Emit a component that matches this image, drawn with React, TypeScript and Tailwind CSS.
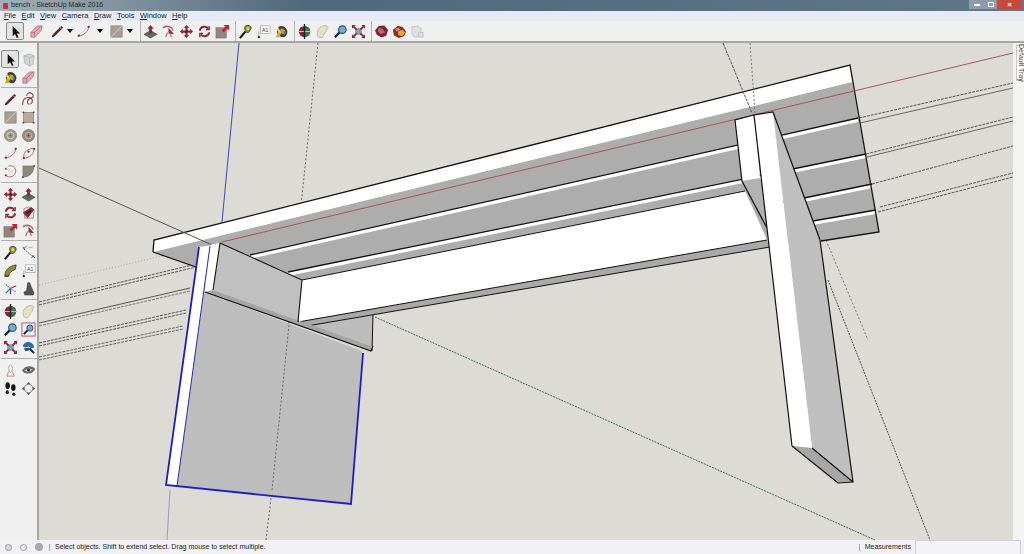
import React from "react";

const RED = "#8c2a36";

const Move = () => (
  <g fill={RED}>
    <path d="M8 1l3 3H9.200v2.800H12V5l3 3-3 3V9.200H9.200V12H11l-3 3-3-3h1.800V9.200H4V11L1 8l3-3v1.800h2.800V4H5z" />
    <circle cx="8" cy="8" r="1.300" fill="#5c1820" />
  </g>
);
const PushPull = () => (
  <g>
    <path d="M1 11l7-4 7 4-7 4z" fill="#5f6b5c" stroke="#3a423a" strokeWidth=".6" />
    <path d="M8 1l3.500 4H9.500v5h-3V5H4.500z" fill={RED} />
  </g>
);
const FollowMe = () => (
  <g fill="none">
    <path d="M2 4c5-3 10-1 11 3" stroke="#b5636c" strokeWidth="1.600" />
    <path d="M8 4l6 7-6-1z" fill={RED} />
    <path d="M7 9l-2 5M10 10l1 4" stroke="#b5636c" strokeWidth="1.200" />
  </g>
);
const Rotate = () => (
  <g fill="none" stroke={RED} strokeWidth="2.200">
    <path d="M3 7a5 5 0 0 1 9-2" />
    <path d="M13 9a5 5 0 0 1-9 2" />
    <path d="M13 2v4H9.500M3 14v-4h3.500" strokeWidth="1.400" />
  </g>
);
const Scale = () => (
  <g>
    <rect x="1" y="4" width="11" height="11" fill="#8f887a" stroke="#666" strokeWidth=".5" />
    <path d="M15 1v6l-2-2-4 4-2-2 4-4-2-2z" fill="#c8202f" />
  </g>
);
const RectIcon = () => (
  <g>
    <rect x="2" y="2" width="12" height="12" fill="#a69e90" stroke="#77726a" strokeWidth=".6" />
    <path d="M2 14L14 2" stroke="#c9c2b6" strokeWidth="1.200" />
  </g>
);
const RotRect = () => (
  <g>
    <rect x="2.500" y="2.500" width="11" height="11" fill="#b8a99a" stroke="#77726a" strokeWidth=".6" />
    <g fill={RED}>
      <circle cx="2.500" cy="2.500" r="1" />
      <circle cx="13.500" cy="13.500" r="1" />
      <circle cx="13.500" cy="2.500" r="1" />
      <circle cx="2.500" cy="13.500" r="1" />
    </g>
  </g>
);
const Circle1 = () => (
  <g fill="none">
    <circle cx="8" cy="8" r="6.500" fill="#a29c8c" stroke="#77726a" strokeWidth=".6" />
    <circle cx="8" cy="8" r="3.500" stroke="#d1ccc0" strokeWidth="1" />
    <circle cx="8" cy="8" r="1" fill="#6a655a" />
  </g>
);
const Circle2 = () => (
  <g fill="none">
    <circle cx="8" cy="8" r="6.500" fill="#998a7c" stroke="#6e655c" strokeWidth=".6" />
    <circle cx="8" cy="8" r="3.500" stroke="#c5b8aa" strokeWidth="1" />
    <circle cx="8" cy="8" r="1" fill={RED} />
  </g>
);
const Arc1 = () => (
  <g fill="none" stroke="#b8606c" strokeWidth="1">
    <path d="M2 13C9 12 13 8 14 2" />
    <path d="M2 13L14 2" stroke="#c9c9c9" />
    <circle cx="3" cy="12.500" r="1.200" fill={RED} stroke="none" />
    <circle cx="13.500" cy="3" r="1.200" fill={RED} stroke="none" />
  </g>
);
const Arc2 = () => (
  <g fill="none" stroke="#b8606c" strokeWidth="1">
    <path d="M3 13C2 6 8 2 14 3c0 5-5 10-11 10z" />
    <circle cx="3" cy="13" r="1.200" fill={RED} stroke="none" />
    <circle cx="8" cy="6" r="1.200" fill={RED} stroke="none" />
    <circle cx="14" cy="3" r="1.200" fill={RED} stroke="none" />
  </g>
);
const Arc3 = () => (
  <g fill="none" stroke="#b8606c" strokeWidth="1">
    <path d="M6 2c6-1 9 4 7 8s-7 5-10 2" />
    <path d="M6 2L3 5l5 3 3-1" stroke="#c9c9c9" />
    <circle cx="3" cy="12" r="1.200" fill={RED} stroke="none" />
    <circle cx="3" cy="5" r="1" fill={RED} stroke="none" />
  </g>
);
const Pie = () => (
  <g>
    <path d="M2 2L14 2C14 9 9 14 2 14z" fill="#8f887a" stroke="#6a655a" strokeWidth=".5" />
    <circle cx="14" cy="2" r="1" fill={RED} />
    <circle cx="2" cy="14" r="1" fill={RED} />
  </g>
);
const Offset = () => (
  <g>
    <path d="M3 4L8 2l6 3-1 9H4z" fill="#e8e8e8" stroke="#b8606c" strokeWidth=".8" />
    <path d="M2 8l9-6 3 3-7 9z" fill={RED} />
    <path d="M5 8l5-3 1 2-4 4z" fill="#2d2d2d" />
  </g>
);
const Pencil = () => (
  <g>
    <path d="M2 14l2-4 8-8 2 2-8 8z" fill="#5a2a30" />
    <path d="M10.500 3.500l2 2" stroke="#d0a0a8" strokeWidth="1" />
    <path d="M2 14l1-3 2 2z" fill="#1e1e1e" />
  </g>
);
const Freehand = () => (
  <g fill="none" stroke="#8a3a46" strokeWidth="1.100">
    <path d="M2 14C1 8 5 5 9 6c4 1 4 5 1 7M9 13C6 13 6 8 10 7c3-1 4-3 2-5S6 1 6 4" />
  </g>
);
const Eraser = () => (
  <g>
    <path d="M2 9l7-7h5l-1 5-7 7H2z" fill="#e9a5b0" stroke="#a8616d" strokeWidth=".7" />
    <path d="M2 9h4l7-7" fill="none" stroke="#a8616d" strokeWidth=".7" />
    <path d="M6 9v5" stroke="#a8616d" strokeWidth=".7" />
  </g>
);
const Select = () => <path d="M5 2v11l2.500-2.300L9.500 15l1.800-.8L9.300 10H13z" fill="#111" />;
const Comp = () => (
  <g fill="#d2d4d4" stroke="#a8acac" strokeWidth=".7">
    <path d="M3 4l6-2 5 2-1 9-4 2-5-3z" />
    <path d="M3 4l6 2 5-2M9 6v9" fill="none" />
  </g>
);
const Paint = () => (
  <g>
    <path d="M5 3c3-2 8 0 9 4 1 3-1 7-4 7-4 0-7-3-7-6z" fill="#3d3d36" />
    <path d="M7 5c2-1 5 1 5 3s-1 3-2 3-4-3-3-6z" fill="#cfa33a" />
    <path d="M2 14l3-8 3 2-2 6z" fill="#c0b232" />
    <path d="M10 7l3 2-2 3z" fill="#4d79a8" />
    <path d="M5 4L3 7l5 4z" fill="#e8d94c" />
  </g>
);
const Tape = () => (
  <g>
    <path d="M8 2c3-1 6 0 6 2s-2 5-4 5-4-5-2-7z" fill="#989a30" stroke="#44441a" strokeWidth="1" />
    <circle cx="10.500" cy="5" r="1.500" fill="#ded98a" />
    <path d="M2 15l6-7" stroke="#1b1b1b" strokeWidth="2.200" />
  </g>
);
const TextIcon = () => (
  <g>
    <rect x="5" y="2" width="10" height="8" fill="#fff" stroke="#8a8a8a" strokeWidth=".6" />
    <text x="6.500" y="8.300" fontSize="5.500" fill="#333" fontFamily="Liberation Sans, sans-serif">A1</text>
    <path d="M3 8v5" stroke="#999" strokeWidth=".8" />
    <circle cx="3" cy="14" r="1.200" fill="#222" />
  </g>
);
const Dim = () => (
  <g stroke="#555" strokeWidth="1" fill="none">
    <path d="M3 4l10 9" strokeDasharray="2 1" />
    <path d="M2 2l2 3M6 1l-3 3M14 11l-3 3M12 11l3 3" />
    <path d="M8 3l5-1" stroke="#aaa" />
  </g>
);
const Protractor = () => (
  <g>
    <path d="M2 14C2 7 7 3 14 2l-1 5c-4 1-6 3-7 7z" fill="#8e8c40" stroke="#3e3e1a" strokeWidth=".9" />
    <path d="M2 14h4" stroke="#222" strokeWidth="1" />
  </g>
);
const Axes = () => (
  <g strokeWidth="1.300" fill="none">
    <path d="M8 8L2 3" stroke="#666" strokeDasharray="1.500 1" />
    <path d="M8 8l6-3" stroke="#b32b3a" />
    <path d="M8 8l-5 5" stroke="#2a8a4a" />
    <path d="M8 8v6" stroke="#2b3fb0" />
    <path d="M8 8l6 4" stroke="#888" strokeDasharray="1.500 1" />
  </g>
);
const Section = () => (
  <path d="M7 2c2-1 3 0 3 2l4 9-1 2H4l-1-3 3-2z" fill="#55554e" stroke="#333" strokeWidth=".5" />
);
const Orbit = () => (
  <g>
    <circle cx="8" cy="8" r="6" fill="#7b2430" />
    <path d="M8 2a6 6 0 0 1 0 12z" fill="#3e6d4f" />
    <path d="M1 8h14" stroke="#b8c0b8" strokeWidth="1.200" />
    <path d="M8 0v16" stroke="#222" strokeWidth="1.400" />
  </g>
);
const Pan = () => (
  <path d="M3 13C1 9 3 4 8 2c3-1 6 0 6 2-2 0-2 1-1 2-1 1-1 2-2 3s-2 3-3 5c-2 1-4 1-5-1z" fill="#e8dfc1" stroke="#b9ab84" strokeWidth=".8" />
);
const Zoom = () => (
  <g>
    <circle cx="10" cy="6" r="4" fill="#7da9cf" stroke="#2b4f74" strokeWidth="1.200" />
    <path d="M7 9l-5 5" stroke="#111f33" strokeWidth="2.400" />
  </g>
);
const ZoomWin = () => (
  <g>
    <rect x="1" y="1" width="14" height="14" fill="none" stroke="#b9384a" strokeWidth=".9" />
    <circle cx="9.500" cy="6.500" r="3.300" fill="#7da9cf" stroke="#2b4f74" strokeWidth="1" />
    <path d="M7 9l-4 4" stroke="#111f33" strokeWidth="2" />
  </g>
);
const ZoomExt = () => (
  <g>
    <rect x="4.500" y="4.500" width="7" height="7" fill="#7f9db5" />
    <g fill="none" stroke={RED} strokeWidth="2">
      <path d="M2 2l4 4M14 2l-4 4M2 14l4-4M14 14l-4-4" />
    </g>
    <g fill={RED}>
      <path d="M1 1h4L1 5zM15 1h-4l4 4zM1 15h4l-4-4zM15 15h-4l4-4z" />
    </g>
  </g>
);
const Prev = () => (
  <g>
    <path d="M2 7c0-3 3-5 6-5 3 0 6 3 6 6l-3 1-3-2-3 1z" fill="#2b6ea5" />
    <path d="M9 9l5 5" stroke="#1a2a40" strokeWidth="2.200" />
    <path d="M3 9l5-1 1 3-4 1z" fill="#1f4f7b" />
  </g>
);
const Warehouse = () => (
  <g>
    <path d="M1 7l4-5 6-.5 4 5-2 6-5 2-5-3z" fill="#7d2431" />
    <path d="M5 4l4 1 3 4-5 2-3-3z" fill="#c06070" />
  </g>
);
const Ext = () => (
  <g>
    <path d="M1 6l5-4 5 1 4 5-2 5-6 2-5-3z" fill="#8c2a2c" />
    <path d="M6 8l5-2 3 3-3 4-4-1z" fill="#e0ab2e" />
    <path d="M3 5l4-1 2 2-4 2z" fill="#d48890" />
  </g>
);
const Share = () => (
  <g fill="#dfe1e1" stroke="#b3b6b6" strokeWidth=".7">
    <path d="M2 3l7-1 3 3-1 8-6 1-3-4z" />
    <path d="M9 9h5v5H9z" />
  </g>
);
const Person = () => (
  <g fill="none" stroke="#999" strokeWidth=".8">
    <ellipse cx="8" cy="6" rx="2" ry="4" />
    <path d="M6 9l-2 5M10 9l2 5M4 14h8" stroke="#bb6670" />
  </g>
);
const Eye = () => (
  <g>
    <path d="M1 8c3-5 10-6 14-2-1 5-10 8-14 2z" fill="#6a6a6a" />
    <path d="M4 8c2-2 6-2 8-1-2 2-6 3-8 1z" fill="#e8e8e8" />
    <circle cx="8" cy="7.500" r="1.500" fill="#222" />
  </g>
);
const Feet = () => (
  <g fill="#141414">
    <ellipse cx="5" cy="5" rx="2.400" ry="3.600" />
    <ellipse cx="4.500" cy="12" rx="1.700" ry="2.200" />
    <ellipse cx="11" cy="7" rx="2.400" ry="3.600" />
    <ellipse cx="11.500" cy="14" rx="1.700" ry="1.800" />
  </g>
);
const Position = () => (
  <g fill="none" stroke="#666" strokeWidth=".9">
    <circle cx="8" cy="8" r="4.500" />
    <path d="M8 1l2 2H6zM8 15l2-2H6zM1 8l2 2V6zM15 8l-2 2V6z" fill="#444" stroke="none" />
  </g>
);

function Ico({ children, boxed, className = "" }: { children: React.ReactNode; boxed?: boolean; className?: string }) {
  return (
    <div
      className={
        "flex w-[18px] h-[18px] shrink-0 items-center justify-center " +
        (boxed ? "bg-[#e4e4e4] border border-[#8a8a8a] rounded-[2px] " : "") +
        className
      }
    >
      <svg width="15" height="15" viewBox="0 0 16 16">
        {children}
      </svg>
    </div>
  );
}

const Caret = ({ className = "" }: { className?: string }) => (
  <div className={"w-0 h-0 border-x-[3px] border-x-transparent border-t-[4px] border-t-black " + className} />
);
const VSep = () => <div className="ml-[4px] w-px h-[20px] bg-[#b4b4b4]" />;
const HSep = ({ wide }: { wide?: boolean }) => (
  <div className={"col-span-2 h-px bg-[#b0b0b0] " + (wide ? "my-[2px]" : "mt-[1px] mb-[2px]")} />
);

const menus = ["File", "Edit", "View", "Camera", "Draw", "Tools", "Window", "Help"];

function LeftBar() {
  return (
    <div className="flex w-[39px] shrink-0 border-r-2 border-[#a6a6a0] bg-[#f0f0f0] pt-[7px] pl-[1px]">
      <div className="grid h-fit grid-cols-[18px_18px]">
        <Ico boxed><Select /></Ico>
        <Ico><Comp /></Ico>
        <Ico><Paint /></Ico>
        <Ico><Eraser /></Ico>
        <HSep />
        <Ico><Pencil /></Ico>
        <Ico><Freehand /></Ico>
        <Ico><RectIcon /></Ico>
        <Ico><RotRect /></Ico>
        <Ico><Circle1 /></Ico>
        <Ico><Circle2 /></Ico>
        <Ico><Arc1 /></Ico>
        <Ico><Arc2 /></Ico>
        <Ico><Arc3 /></Ico>
        <Ico><Pie /></Ico>
        <HSep wide />
        <Ico><Move /></Ico>
        <Ico><PushPull /></Ico>
        <Ico><Rotate /></Ico>
        <Ico><Offset /></Ico>
        <Ico><Scale /></Ico>
        <Ico><FollowMe /></Ico>
        <HSep />
        <Ico><Tape /></Ico>
        <Ico><Dim /></Ico>
        <Ico><Protractor /></Ico>
        <Ico><TextIcon /></Ico>
        <Ico><Axes /></Ico>
        <Ico><Section /></Ico>
        <HSep wide />
        <Ico><Orbit /></Ico>
        <Ico><Pan /></Ico>
        <Ico><Zoom /></Ico>
        <Ico><ZoomWin /></Ico>
        <Ico><ZoomExt /></Ico>
        <Ico><Prev /></Ico>
        <HSep wide />
        <Ico><Person /></Ico>
        <Ico><Eye /></Ico>
        <Ico><Feet /></Ico>
        <Ico><Position /></Ico>
      </div>
    </div>
  );
}

function Slat({ x1, y1, x2, y2 }: { x1: number; y1: number; x2: number; y2: number }) {
  return (
    <g>
      <polygon points={`${x1},${y1} ${x2},${y2} ${x2},${y2 + 4} ${x1},${y1 + 4}`} fill="#fff" />
      <line x1={x1} y1={y1} x2={x2} y2={y2} stroke="#111" strokeWidth="1.300" />
    </g>
  );
}

function Bench() {
  return (
    <svg className="block h-full w-full" viewBox="39 43 974 497">
      {/* guides */}
      <g fill="none" strokeWidth="1">
        <path d="M318 43L288 330" stroke="#666" strokeDasharray="2 2" />
        <path d="M828 280L930 540" stroke="#555" strokeDasharray="2 1" />
        <path d="M826 240L868 340" stroke="#777" strokeDasharray="2 2" />
        <path d="M266 540L272 490" stroke="#666" strokeDasharray="2 2" />
        <path d="M170 490L167 540" stroke="#9a9cb0" />
        <path d="M375 317L875 540" stroke="#3f6e48" strokeDasharray="2 1" />
        <path d="M39 285L200 247" stroke="#c49a9a" strokeDasharray="1 2" />
        <path d="M239 43L220 243" stroke="#3a4ab8" />
        <path d="M878 212L1013 177M880 207L1013 173" stroke="#555" strokeDasharray="3 1" />
        <path d="M872 184L1013 146" stroke="#555" strokeDasharray="3 1" />
        <path d="M866 154L1013 117" stroke="#555" strokeDasharray="3 1" />
        <path d="M867 157L1013 121" stroke="#666" />
        <path d="M859 118L1013 83" stroke="#555" strokeDasharray="3 1" />
        <path d="M860 123L1013 88" stroke="#666" />
        <path d="M39 302L196 264M39 305L196 267" stroke="#555" strokeDasharray="3 1" />
        <path d="M39 323L190 288" stroke="#555" />
        <path d="M39 326L190 291" stroke="#777" strokeDasharray="3 1" />
        <path d="M39 343L186 310M39 346L186 313" stroke="#555" strokeDasharray="3 1" />
        <path d="M39 357L183 326M39 360L183 329" stroke="#666" strokeDasharray="3 1" />
      </g>

      {/* underside and slats */}
      <polygon points="153,252 852,82 879,232 821,241 767,240 745,191 302,280 220,243 200,247 195,267" fill="#adadad" />
      <Slat x1={250} y1={255} x2={858} y2={118} />
      <Slat x1={288} y1={272} x2={866} y2={154} />
      <Slat x1={770} y1={205} x2={872} y2={184} />
      <Slat x1={790} y1={225} x2={876} y2={210} />
      <polygon points="154,240 850,65 852,82 153,252" fill="#fff" />
      <path d="M153 252L154 240L850 65L879 232L821 241" fill="none" stroke="#111" strokeWidth="1.300" />
      <path d="M153 252L196 267" stroke="#111" strokeWidth="1.200" />
      <path d="M222 242L1013 53" stroke="#a8545c" strokeWidth="1" />
      <path d="M39 168L212 245" stroke="#555" strokeWidth="1" />
      <path d="M723 43L752 113" stroke="#555" strokeWidth="1" strokeDasharray="3 1" />
      <path d="M750 43L755 113" stroke="#777" strokeWidth="1" strokeDasharray="2 2" />

      {/* beam */}
      <polygon points="302,280 745,191 767,240 298,322" fill="#fff" />
      <polygon points="298,322 767,240 770,247 307,326" fill="#a9a9a9" />
      <polygon points="307,326 373,315 372,351" fill="#bcbcbc" />
      <path d="M302 280L745 191M298 322L767 240M307 326L770 247" stroke="#111" strokeWidth="1" />
      <path d="M373 315L372 351" stroke="#111" />

      {/* left leg */}
      <polygon points="204,292 362,351 351,504 177,486" fill="#bdbdbd" />
      <polygon points="199,247 210,246 177,486 166,485" fill="#fff" />
      <polygon points="220,243 302,280 298,320 213,290" fill="#c0c0c0" />
      <polygon points="210,245 220,243 213,290 205,292" fill="#fff" />
      <polygon points="205,292 213,290 373,347 371,351" fill="#a4a4a4" />
      <path d="M220 243L302 280L298 322M205 292L371 351L373 346M213 290L220 243" fill="none" stroke="#111" strokeWidth="1.100" />
      <path d="M289 325L272 490" stroke="#666" strokeDasharray="2 2" />
      <path d="M210 246L177 486" stroke="#2a2aa8" strokeWidth="1" />
      <path d="M199 247L166 485L351 504L363 353" fill="none" stroke="#1c1cc8" strokeWidth="1.800" />

      {/* right legs */}
      <polygon points="735,120 754,115 760,178 742,181" fill="#fff" />
      <polygon points="742,181 760,178 767,228" fill="#b2b2b2" />
      <path d="M754 115L735 120L742 181L767 228" fill="none" stroke="#111" strokeWidth="1.200" />
      <polygon points="773,112 820,240 853,482 812,448" fill="#bfbfbf" />
      <polygon points="754,115 773,112 812,448 792,446" fill="#fff" />
      <polygon points="792,446 812,448 853,482 838,483" fill="#a6a6a6" />
      <path d="M792 446L754 115L773 112L820 240L853 482L838 483L792 446M812 448L853 482" fill="none" stroke="#111" strokeWidth="1.200" />
    </svg>
  );
}

export default function App() {
  return (
    <div className="flex h-[554px] w-[1024px] flex-col overflow-hidden bg-[#f0f0f0] font-['Liberation_Sans',sans-serif] text-[7px] text-[#222]">
      {/* title bar */}
      <div className="flex h-[11px] shrink-0 items-center bg-gradient-to-r from-[#a3aeb5] via-[#4f687b] via-[30%] to-[#5f7789] pl-[3px]">
        <div className="mr-[3px] h-[6px] w-[5px] rounded-[1px] bg-[#c0323c]" />
        <span className="text-[#20272c]">bench - SketchUp Make 2016</span>
        <div className="ml-auto mr-[2px] flex h-[9px] self-start">
          <div className="flex w-[15px] items-center justify-center bg-[#8d9ca8]">
            <div className="h-[2px] w-[6px] bg-white" />
          </div>
          <div className="flex w-[13px] items-center justify-center bg-[#8d9ca8]">
            <div className="h-[5px] w-[6px] border border-white" />
          </div>
          <div className="flex w-[25px] items-center justify-center bg-[#c8493c] text-[8px] font-bold text-white">×</div>
        </div>
      </div>

      {/* menu bar */}
      <div className="flex h-[10px] shrink-0 items-center gap-[5.5px] bg-[#e6eaf4] pl-[4px] text-[7.5px]">
        {menus.map((m) => (
          <span key={m}>
            <span className="underline">{m[0]}</span>
            {m.slice(1)}
          </span>
        ))}
      </div>

      {/* main toolbar */}
      <div className="flex h-[22px] shrink-0 items-center border-b-2 border-[#a6a6a0] bg-[#f0f0f0] pl-[6px]">
        <Ico boxed><Select /></Ico>
        <Ico className="ml-[3px]"><Eraser /></Ico>
        <Ico className="ml-[3px]"><Pencil /></Ico>
        <Caret className="ml-[1px] mr-[1px]" />
        <Ico><Arc1 /></Ico>
        <Caret className="ml-[5px] mr-[4px]" />
        <Ico><RectIcon /></Ico>
        <Caret className="ml-[2px] mr-[3px]" />
        <VSep />
        <Ico><PushPull /></Ico>
        <Ico><FollowMe /></Ico>
        <Ico><Move /></Ico>
        <Ico><Rotate /></Ico>
        <Ico><Scale /></Ico>
        <VSep />
        <Ico><Tape /></Ico>
        <Ico><TextIcon /></Ico>
        <Ico><Paint /></Ico>
        <VSep />
        <Ico><Orbit /></Ico>
        <Ico><Pan /></Ico>
        <Ico><Zoom /></Ico>
        <Ico><ZoomExt /></Ico>
        <VSep />
        <Ico><Warehouse /></Ico>
        <Ico><Ext /></Ico>
        <Ico><Share /></Ico>
      </div>

      {/* workspace */}
      <div className="flex min-h-0 flex-1">
        <LeftBar />
        <div className="min-w-0 flex-1 bg-[#dcdbd6]">
          <Bench />
        </div>
        <div className="flex w-[11px] shrink-0 justify-end bg-[#f3f3f3] pt-[2px]">
          <div className="flex h-[36px] w-[8px] items-center justify-center rounded-l-[1px] border border-r-0 border-[#c8c8c8] bg-white">
            <span className="whitespace-nowrap text-[7px] text-[#444] [writing-mode:vertical-rl]">Default Tray</span>
          </div>
        </div>
      </div>

      {/* status bar */}
      <div className="flex h-[14px] shrink-0 items-center bg-[#f1f1f3] pl-[5px]">
        <div className="h-[7px] w-[7px] rounded-full border border-[#9a9a9a] bg-[#d8d8d8]" />
        <div className="ml-[8px] h-[7px] w-[7px] rounded-full border border-[#9a9a9a] bg-[#f0f0f0]" />
        <div className="ml-[8px] h-[8px] w-[8px] rounded-full bg-[#a8a8a8]" />
        <div className="ml-[6px] h-[7px] w-px bg-[#a8a8a8]" />
        <span className="ml-[5px]">Select objects. Shift to extend select. Drag mouse to select multiple.</span>
        <div className="ml-auto h-[7px] w-px bg-[#a8a8a8]" />
        <span className="ml-[5px]">Measurements</span>
        <div className="ml-[4px] mr-[3px] h-[14px] w-[106px] border border-b-0 border-[#d0d2d8] bg-[#f4f4f6]" />
      </div>
    </div>
  );
}
